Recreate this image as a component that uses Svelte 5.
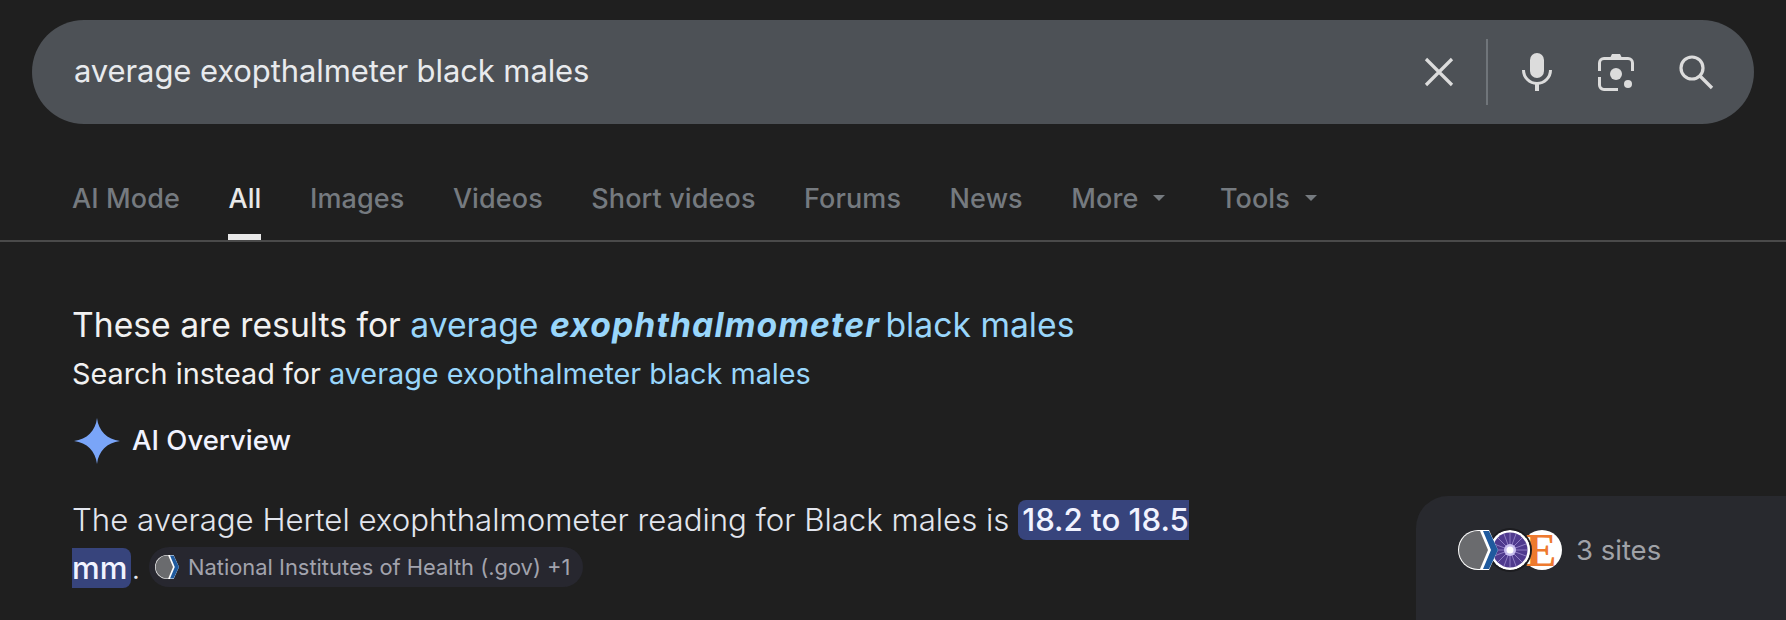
<script>
  const tabs = [
    { label: 'AI Mode' },
    { label: 'All', active: true },
    { label: 'Images' },
    { label: 'Videos' },
    { label: 'Short videos' },
    { label: 'Forums' },
    { label: 'News' },
    { label: 'More', menu: true },
    { label: 'Tools', menu: true, tools: true }
  ];
</script>

{#snippet nihLogo(size)}
  <svg class="fav" width={size} height={size} viewBox="0 0 40 40" aria-hidden="true">
    <path d="M20 0 A20 20 0 0 0 20 40 L31 40 L40 20 L31 0 Z" fill="#fff" />
    <path d="M20 1 A19 19 0 0 0 20 39 L22 39 L30 20 L22 1 Z" fill="#6a6b6e" />
    <path d="M25 1 L31 1 L40 20 L31 39 L25 39 L33 20 Z" fill="#1f5a9e" />
  </svg>
{/snippet}

<div class="page">
  <div class="searchbar">
    <div class="query">average exopthalmeter black males</div>
    <div class="actions">
      <svg class="clear" width="30" height="30" viewBox="0 0 30 30" aria-hidden="true">
        <path d="M2 2 L28 28 M28 2 L2 28" stroke="#dcdcdc" stroke-width="3.2" fill="none" />
      </svg>
      <span class="divider"></span>
      <svg class="mic" width="30" height="38" viewBox="0 0 30 38" aria-hidden="true">
        <rect x="8" y="0" width="14" height="25" rx="7" fill="#dcdcdc" />
        <path d="M1.5 17 a13.5 13.5 0 0 0 27 0" stroke="#dcdcdc" stroke-width="3" fill="none" />
        <rect x="13" y="30" width="4" height="8" fill="#dcdcdc" />
      </svg>
      <svg class="lens" width="36" height="38" viewBox="0 0 36 38" aria-hidden="true">
        <path d="M12 5 L14 1 H22 L24 5 Z" fill="#dcdcdc" />
        <path d="M1.5 18 V10 a4.5 4.5 0 0 1 4.5 -4.5 H30 a4.5 4.5 0 0 1 4.5 4.5 V18" stroke="#dcdcdc" stroke-width="3" fill="none" />
        <path d="M1.5 24 V32 a4.5 4.5 0 0 0 4.5 4.5 H20" stroke="#dcdcdc" stroke-width="3" fill="none" />
        <circle cx="18" cy="21" r="6" fill="#dcdcdc" />
        <circle cx="30" cy="31" r="4" fill="#dcdcdc" />
      </svg>
      <svg class="search" width="36" height="36" viewBox="0 0 36 36" aria-hidden="true">
        <circle cx="14" cy="14" r="11" stroke="#dcdcdc" stroke-width="3.2" fill="none" />
        <path d="M22 22 L34 34" stroke="#dcdcdc" stroke-width="3.4" fill="none" />
      </svg>
    </div>
  </div>

  <nav class="tabs">
    {#each tabs as tab}
      <div class="tab" class:active={tab.active} class:tools={tab.tools}>
        {tab.label}
        {#if tab.menu}<span class="caret"></span>{/if}
      </div>
    {/each}
  </nav>

  <div class="content">
    <main class="results">
      <div class="corrected">These are results for <a href="#q">average <b>exophthalmometer</b> black males</a></div>
      <div class="instead">Search instead for <a href="#q">average exopthalmeter black males</a></div>
      <div class="ai-head">
        <svg width="46" height="46" viewBox="0 0 46 46" aria-hidden="true">
          <path d="M23 0 C24.5 13 33 21.5 46 23 C33 24.5 24.5 33 23 46 C21.5 33 13 24.5 0 23 C13 21.5 21.5 13 23 0 Z" fill="#7aa5f8" />
        </svg>
        <span>AI Overview</span>
      </div>
      <p class="answer">
        The average Hertel exophthalmometer reading for Black males is <mark>18.2 to 18.5 mm</mark>.
        <span class="chip">
          {@render nihLogo(24)}
          <span>National Institutes of Health (.gov) +1</span>
        </span>
      </p>
    </main>

    <aside class="panel">
      <div class="sites">
        <div class="favicons">
          {@render nihLogo(40)}
          <svg class="fav ring" width="40" height="40" viewBox="0 0 40 40" aria-hidden="true">
            <circle cx="20" cy="20" r="20" fill="#fff" />
            <circle cx="20" cy="20" r="17.5" fill="#4f3a8e" />
            <g stroke="#a99ad8" stroke-width="0.7">
              <path d="M3 20 H37 M20 3 V37 M8 8 L32 32 M32 8 L8 32 M4 14 L36 26 M4 26 L36 14 M14 4 L26 36 M26 4 L14 36" />
            </g>
            <circle cx="20" cy="20" r="6" fill="#c9bff0" />
            <circle cx="20" cy="20" r="3.5" fill="#fff" />
          </svg>
          <svg class="fav" width="40" height="40" viewBox="0 0 40 40" aria-hidden="true">
            <circle cx="20" cy="20" r="20" fill="#fff" />
            <text x="19" y="36" text-anchor="middle" font-family="Liberation Serif" font-size="46" font-weight="700" fill="#ee7a2f">E</text>
          </svg>
        </div>
        <span>3 sites</span>
      </div>
      <div class="panel-text">Normative data for</div>
    </aside>
  </div>
</div>

<style>
  :global(body) {
    margin: 0;
    background: #1f1f1f;
  }

  .page {
    height: 620px;
    overflow: hidden;
    background: #1f1f1f;
    font-family: Inter, "Liberation Sans", sans-serif;
    color: #e8eaed;
  }

  .searchbar {
    display: flex;
    align-items: center;
    justify-content: space-between;
    height: 104px;
    margin: 20px 32px 0;
    padding: 0 40px 0 42px;
    border-radius: 52px;
    background: #4d5156;
  }

  .query {
    padding-bottom: 4px;
    font-size: 31px;
    letter-spacing: -0.1px;
    color: #e8eaed;
  }

  .actions {
    display: flex;
    align-items: center;
  }

  .divider {
    width: 2px;
    height: 66px;
    margin: 0 34px 0 32px;
    background: #70757a;
  }

  .lens {
    margin: 0 44px 0 46px;
  }

  .tabs {
    display: flex;
    align-items: stretch;
    gap: 48.5px;
    height: 116px;
    padding-left: 72px;
    border-bottom: 2px solid #4a4a4a;
  }

  .tab {
    display: flex;
    align-items: center;
    gap: 15px;
    padding-top: 38px;
    box-sizing: border-box;
    border-bottom: 6px solid transparent;
    font-size: 27px;
    font-weight: 500;
    letter-spacing: 0.1px;
    color: #757a7f;
  }

  .tab.active {
    color: #e8e8e8;
    border-bottom-color: #e8e8e8;
  }

  .tab.tools {
    margin-left: 6px;
  }

  .caret {
    width: 0;
    height: 0;
    border-left: 6px solid transparent;
    border-right: 6px solid transparent;
    border-top: 6px solid #757a7f;
  }

  .content {
    display: flex;
    justify-content: space-between;
    padding-left: 72px;
  }

  .results {
    width: 1140px;
  }

  a {
    color: #99d6fb;
    text-decoration: none;
  }

  .corrected {
    margin-top: 61px;
    font-size: 33.7px;
    line-height: 44px;
    color: #f1f1f1;
  }

  .corrected b {
    margin: 0 -4px 0 2px;
    font-style: italic;
    font-weight: 700;
    letter-spacing: 1.1px;
  }

  .instead {
    margin-top: 7px;
    font-size: 28.8px;
    line-height: 40px;
    color: #f1f1f1;
  }

  .ai-head {
    display: flex;
    align-items: center;
    gap: 12px;
    margin-top: 24px;
    margin-left: 2px;
    font-size: 27.5px;
    font-weight: 500;
    color: #f1f3ff;
  }

  .ai-head span {
    padding-bottom: 3px;
  }

  .answer {
    margin: 32px 0 0;
    font-size: 31.2px;
    font-weight: 300;
    line-height: 48px;
    color: #e3e6ee;
  }

  mark {
    padding: 1px 4px;
    border-radius: 8px;
    background: #37447c;
    color: #f1f3ff;
    font-weight: 500;
    -webkit-box-decoration-break: slice;
    box-decoration-break: slice;
  }

  .chip {
    display: inline-flex;
    align-items: center;
    gap: 9px;
    height: 40px;
    margin-bottom: 6px;
    padding: 0 13px 0 6px;
    border-radius: 20px;
    background: #27272f;
    font-size: 21.9px;
    font-weight: 400;
    color: #a2a3ad;
    vertical-align: middle;
  }

  .panel {
    width: 370px;
    height: 300px;
    margin-top: 254px;
    padding: 34px 0 0 42px;
    box-sizing: border-box;
    border-radius: 32px 0 0 32px;
    background: #28292e;
  }

  .sites {
    display: flex;
    align-items: center;
    gap: 14px;
    font-size: 27.5px;
    color: #a0a2a7;
  }

  .favicons {
    display: flex;
  }

  .favicons :global(.fav) {
    position: relative;
    margin-right: -8px;
  }

  .favicons :global(.fav:nth-child(1)) {
    z-index: 3;
  }

  .favicons .ring {
    z-index: 2;
    border-radius: 50%;
    box-shadow: 0 0 0 2px #1c1c20;
  }

  .favicons :global(.fav:last-child) {
    margin-right: 0;
  }

  .panel-text {
    margin-top: 45px;
    font-size: 28px;
    color: #e3e6ee;
  }
</style>
